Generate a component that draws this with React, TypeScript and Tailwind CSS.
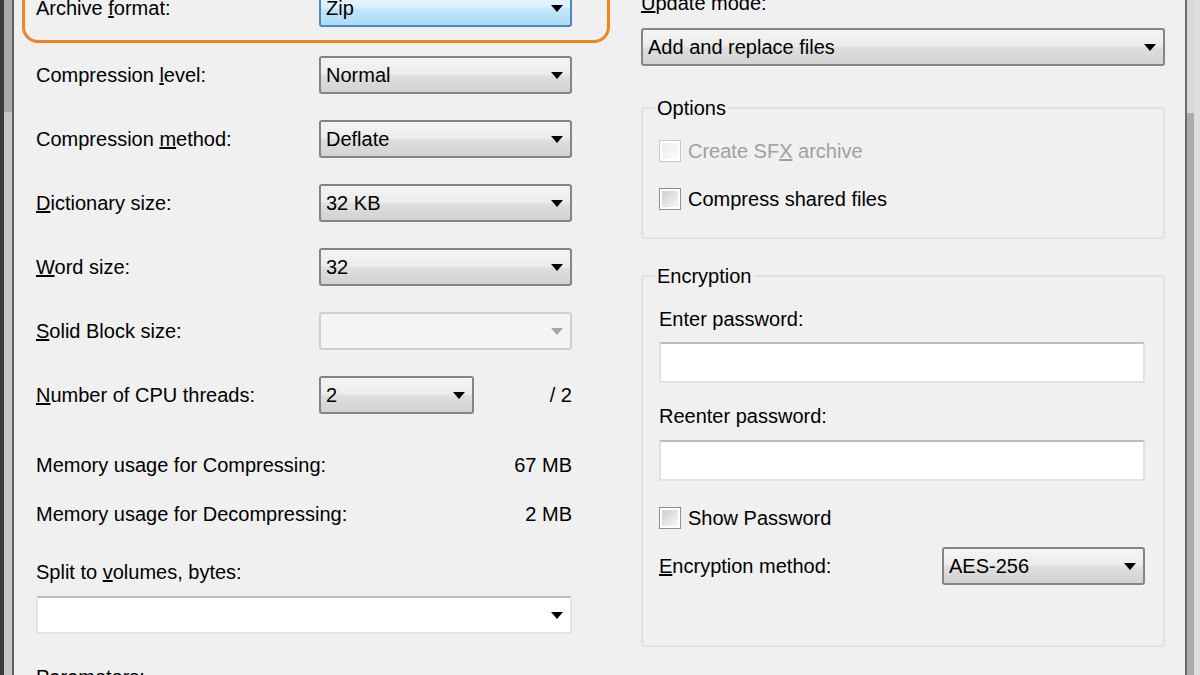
import type { ReactNode } from "react";

type ComboKind = "normal" | "hot" | "disabled" | "edit";

const COMBO: Record<ComboKind, string> = {
  normal:
    "border-[#858585] bg-[linear-gradient(to_bottom,#f4f4f4,#ececec_46%,#dedede_54%,#d2d2d2)]",
  hot: "border-[#4a89bb] bg-[linear-gradient(to_bottom,#ecf7fd,#dbf1fc_46%,#c3e7fc_54%,#acdaf4)]",
  disabled: "border-[#cdd0d3] bg-[#f4f4f4]",
  edit: "border-[#dfe3e8] border-t-[#b9bdc3] bg-white",
};

function Arrow({ muted }: { muted?: boolean }) {
  return (
    <svg width="12" height="7" viewBox="0 0 12 7" className="shrink-0">
      <path d="M0 0H12L6 7Z" className={muted ? "fill-[#a6a6a6]" : "fill-black"} />
    </svg>
  );
}

function Combo({ value, kind = "normal", className = "" }: { value?: string; kind?: ComboKind; className?: string }) {
  return (
    <div
      className={`flex h-[38px] shrink-0 items-center justify-between rounded-[3px] border-2 pl-[5px] pr-[7px] ${COMBO[kind]} ${className}`}
    >
      <span>{value}</span>
      <Arrow muted={kind === "disabled"} />
    </div>
  );
}

function TextBox() {
  return <div className="h-[41px] w-full rounded-[2px] border-2 border-[#dfe3e8] border-t-[#b9bdc3] bg-white" />;
}

function Check({ label, disabled }: { label: ReactNode; disabled?: boolean }) {
  return (
    <div className={`flex h-[24px] items-center gap-[7px] ${disabled ? "text-[#a0a0a0]" : ""}`}>
      <div
        className={`flex h-[22px] w-[22px] items-center justify-center border ${
          disabled ? "border-[#c8c8c8]" : "border-[#8e8f8f]"
        } bg-white`}
      >
        <div
          className={`h-[16px] w-[16px] ${
            disabled
              ? "bg-[linear-gradient(135deg,#ececec,#fbfbfb)]"
              : "bg-[linear-gradient(135deg,#cfcfcf,#f6f6f6)]"
          }`}
        />
      </div>
      <span>{label}</span>
    </div>
  );
}

function Row({ label, children, className = "" }: { label: ReactNode; children: ReactNode; className?: string }) {
  return (
    <div className={`flex h-[38px] shrink-0 items-center justify-between ${className}`}>
      <span>{label}</span>
      {children}
    </div>
  );
}

function Group({ title, children, className = "" }: { title: string; children: ReactNode; className?: string }) {
  return (
    <fieldset className={`shrink-0 rounded-[4px] border-2 border-[#dbe3e8] px-[16px] ${className}`}>
      <legend className="ml-[-4px] px-[2px] leading-[24px]">{title}</legend>
      {children}
    </fieldset>
  );
}

export default function App() {
  return (
    <div className="flex h-[675px] w-[1200px] overflow-hidden bg-[#f0f0f0] font-['Liberation_Sans',Arial,sans-serif] text-[20px] leading-[24px] text-black">
      {/* left window edge */}
      <div className="flex shrink-0">
        <div className="w-[4px] bg-[#3b3b3b]" />
        <div className="flex w-[8px] flex-col">
          <div className="h-[112px] bg-[#a9a9a9]" />
          <div className="flex-1 bg-[#c7c7c7]" />
        </div>
        <div className="w-[2px] bg-[#5e5e5e]" />
      </div>

      {/* left column */}
      <div className="relative ml-[22px] flex w-[536px] shrink-0 flex-col self-start">
        <div className="absolute left-[-14px] top-[-30px] h-[73px] w-[588px] rounded-[16px] border-[3px] border-[#f5821f]" />

        <Row label={<>Archive <u>f</u>ormat:</>} className="mt-[-11px]">
          <Combo value="Zip" kind="hot" className="w-[253px]" />
        </Row>
        <Row label={<>Compression <u>l</u>evel:</>} className="mt-[29px]">
          <Combo value="Normal" className="w-[253px]" />
        </Row>
        <Row label={<>Compression <u>m</u>ethod:</>} className="mt-[26px]">
          <Combo value="Deflate" className="w-[253px]" />
        </Row>
        <Row label={<><u>D</u>ictionary size:</>} className="mt-[26px]">
          <Combo value="32 KB" className="w-[253px]" />
        </Row>
        <Row label={<><u>W</u>ord size:</>} className="mt-[26px]">
          <Combo value="32" className="w-[253px]" />
        </Row>
        <Row label={<><u>S</u>olid Block size:</>} className="mt-[26px]">
          <Combo kind="disabled" className="w-[253px]" />
        </Row>
        <div className="mt-[26px] flex h-[38px] shrink-0 items-center">
          <span className="w-[283px]"><u>N</u>umber of CPU threads:</span>
          <Combo value="2" className="w-[155px]" />
          <span className="ml-auto">/ 2</span>
        </div>

        <div className="mt-[39px] flex justify-between">
          <span>Memory usage for Compressing:</span>
          <span>67 MB</span>
        </div>
        <div className="mt-[25px] flex justify-between">
          <span>Memory usage for Decompressing:</span>
          <span>2 MB</span>
        </div>

        <div className="mt-[34px]">
          Split to <u>v</u>olumes, bytes:
        </div>
        <Combo kind="edit" className="mt-[12px] w-full" />

        <div className="mt-[31px]">
          <u>P</u>arameters:
        </div>
      </div>

      {/* right column */}
      <div className="ml-[69px] flex w-[524px] shrink-0 flex-col self-start">
        <div className="mt-[-9px]">
          <u>U</u>pdate mode:
        </div>
        <Combo value="Add and replace files" className="mt-[13px] w-full" />

        <Group title="Options" className="mt-[30px] pb-[26px]">
          <div className="mt-[19px]">
            <Check disabled label={<>Create SF<u>X</u> archive</>} />
          </div>
          <div className="mt-[24px]">
            <Check label="Compress shared files" />
          </div>
        </Group>

        <Group title="Encryption" className="mt-[25px] pb-[60px]">
          <div className="mt-[19px]">Enter password:</div>
          <div className="mt-[11px] pr-[2px]">
            <TextBox />
          </div>
          <div className="mt-[21px]">Reenter password:</div>
          <div className="mt-[12px] pr-[2px]">
            <TextBox />
          </div>
          <div className="mt-[25px]">
            <Check label="Show Password" />
          </div>
          <div className="mt-[17px] flex h-[38px] items-center justify-between pr-[2px]">
            <span><u>E</u>ncryption method:</span>
            <Combo value="AES-256" className="w-[203px]" />
          </div>
        </Group>
      </div>

      {/* right window edge */}
      <div className="ml-auto flex shrink-0">
        <div className="w-[2px] bg-[#6a6a6a]" />
        <div className="flex w-[7px] flex-col">
          <div className="h-[113px] bg-[#d9d9d9]" />
          <div className="flex-1 bg-[#acacac]" />
        </div>
        <div className="w-[6px] bg-[#dedede]" />
      </div>
    </div>
  );
}
